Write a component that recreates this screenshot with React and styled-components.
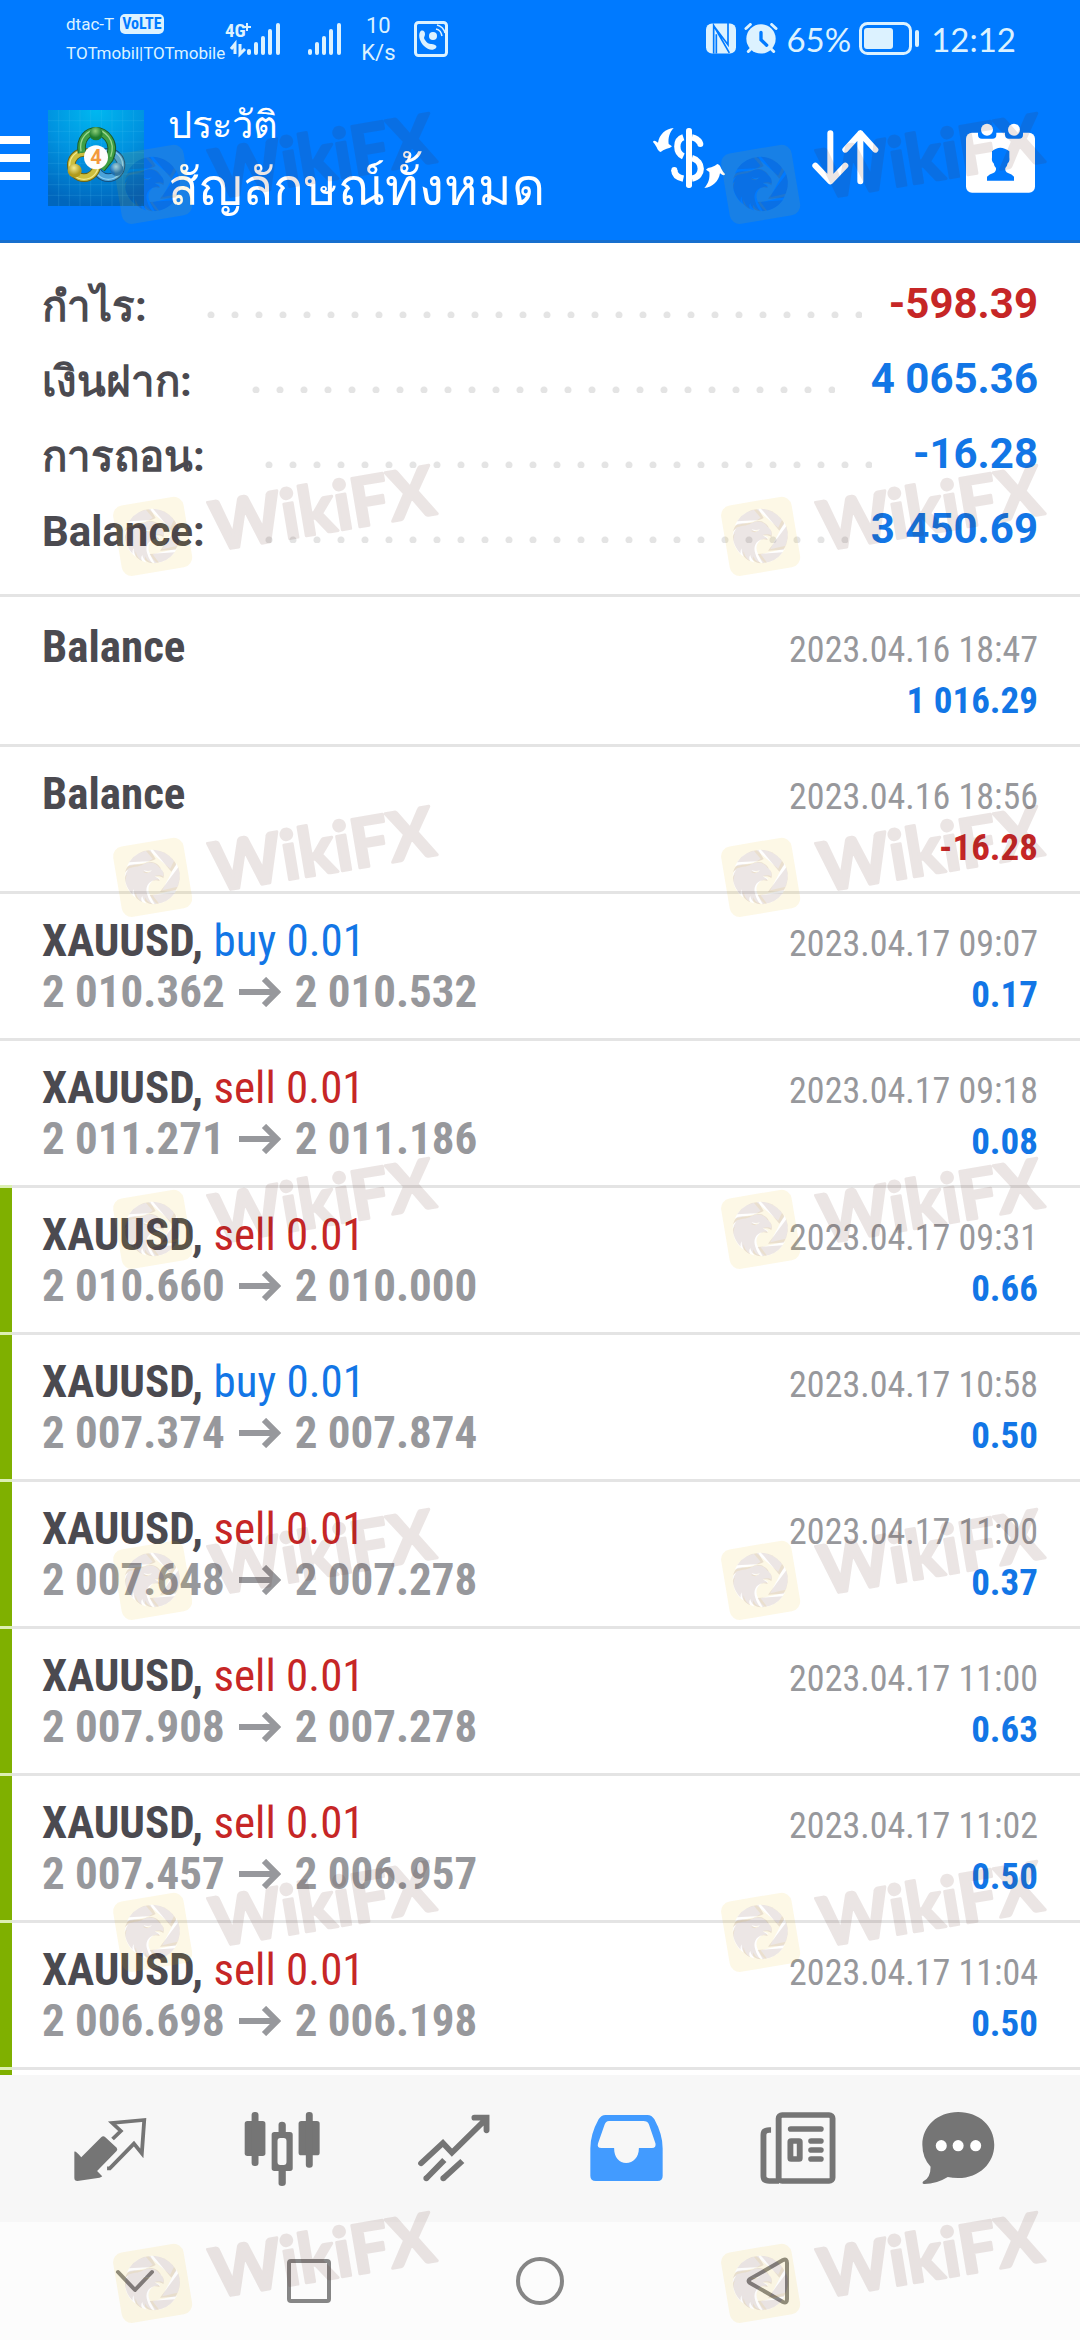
import React from "react";
import styled, { createGlobalStyle } from "styled-components";

const color = {
  brand: "#007aff",
  text: "#4b4a50",
  muted: "#97989c",
  blue: "#1276e6",
  red: "#c62626",
  rule: "#e4e4e4",
  green: "#7fb000",
  greenRule: "#dcefb4",
  status: "#dcf2ff",
  tab: "#757575",
  tabActive: "#429bff",
};

const condensed = `"Roboto Condensed", Roboto, "Liberation Sans", sans-serif`;

const GlobalStyle = createGlobalStyle`
  * { box-sizing: border-box; }
  body { margin: 0; background: #fff; }
  body, button { font-family: Roboto, "Liberation Sans", sans-serif; }
  h1, h2, p, dl, dt, dd, ul { margin: 0; padding: 0; font-weight: inherit; }
`;

const Page = styled.div`
  position: relative;
  display: flex;
  flex-direction: column;
  height: 100vh;
  overflow: hidden;
`;

/* ---------- header ---------- */

const Header = styled.header`
  background: ${color.brand};
  border-bottom: 3px solid #176fce;
  color: #fff;
`;

const StatusBar = styled.div`
  display: flex;
  align-items: center;
  height: 75px;
  padding: 2px 64px 0 66px;
  color: ${color.status};
`;

const Carriers = styled.div`
  display: grid;
  font-size: 17px;
  line-height: 29px;
  white-space: nowrap;
`;

const CarrierLine = styled.div`
  display: flex;
  align-items: center;
  gap: 6px;
`;

const Badge = styled.span`
  padding: 0 2px;
  border-radius: 5px;
  background: ${color.status};
  color: ${color.brand};
  font-family: ${condensed};
  font-size: 16px;
  font-weight: 700;
  line-height: 20px;
`;

const Speed = styled.div`
  font-size: 22px;
  line-height: 27px;
  text-align: center;
`;

const StatusGroup = styled.div`
  display: flex;
  align-items: center;
  gap: ${(p) => p.$gap}px;
  margin-left: ${(p) => (p.$end ? "auto" : "0")};
`;

const StatusText = styled.span`
  font-family: Lato, Roboto, sans-serif;
  font-size: 33px;
  line-height: 40px;
`;

const Clock = styled(StatusText)`
  margin-left: 4px;
`;

const Toolbar = styled.div`
  display: flex;
  align-items: center;
  height: 165px;
  padding-right: 45px;
`;

const IconButton = styled.button`
  display: flex;
  flex: none;
  padding: 0;
  border: 0;
  background: none;
  color: inherit;
  cursor: pointer;
`;

const AppLogo = styled.div`
  display: flex;
  margin: 0 24px 0 18px;
`;

const Titles = styled.div`
  flex: 1;
  min-width: 0;
  padding-top: 10px;
  white-space: nowrap;
`;

const Title = styled.h1`
  font-size: 38px;
  line-height: 50px;
`;

const Subtitle = styled.p`
  font-size: 51px;
  line-height: 76px;
`;

const Actions = styled.div`
  display: flex;
  align-items: center;
  gap: 87px;
`;

/* ---------- summary ---------- */

const Summary = styled.dl`
  padding: 23px 42px 28px;
  border-bottom: 3px solid ${color.rule};
  font-size: 42px;
  font-weight: 700;
`;

const SummaryRow = styled.div`
  display: flex;
  align-items: center;
  height: 75px;
`;

const Term = styled.dt`
  padding-top: 6px;
  color: ${color.text};
  line-height: 69px;
`;

const Leader = styled.div`
  flex: 1;
  height: 7px;
  margin: 22px 22px 0 60px;

  &::before {
    content: "";
    display: block;
    width: calc(round(down, 100% - 7px, 24px) + 7px);
    height: 7px;
    background: radial-gradient(circle at 4px 4px, ${color.rule} 3px, transparent 4px) 0 0 / 24px 7px;
  }
`;

const Total = styled.dd`
  color: ${(p) => (p.$loss ? color.red : color.blue)};
  line-height: 75px;
`;

/* ---------- deals ---------- */

const Scroll = styled.main`
  display: flex;
  flex: 1;
  flex-direction: column;
  min-height: 0;
  overflow: hidden;
`;

const Deals = styled.ul`
  display: flex;
  flex: 1;
  flex-direction: column;
  list-style: none;
`;

const Deal = styled.li`
  position: relative;
  flex: none;
  padding: 21px 42px;
  border-top: 3px solid ${color.rule};
  font-family: ${condensed};

  &:first-child { border-color: transparent; }

  &::before {
    content: "";
    position: absolute;
    top: 0;
    bottom: 0;
    left: 0;
    width: 12px;
    background: ${(p) => (p.$marked ? color.green : "none")};
  }

  &::after {
    content: "";
    position: absolute;
    top: -3px;
    left: 0;
    width: 12px;
    height: 3px;
    background: ${(p) => (p.$marked ? color.greenRule : "none")};
  }
`;

const NextDeal = styled(Deal)`
  flex: 1;
  padding: 0;
`;

const Line = styled.div`
  display: flex;
  align-items: baseline;
  height: 51px;
  font-size: 45px;
  line-height: 51px;
  white-space: nowrap;

  &::before { content: "\\200b"; }
`;

const Symbol = styled.h2`
  color: ${color.text};
  font-size: 45px;
  font-weight: 700;
`;

const Side = styled.span`
  color: ${(p) => (p.$side === "buy" ? color.blue : color.red)};
  font-weight: 400;
`;

const Prices = styled.span`
  display: inline-flex;
  align-items: baseline;
  gap: 14px;
  color: ${color.muted};
  font-weight: 700;
`;

const Time = styled.time`
  margin-left: auto;
  color: ${color.muted};
  font-size: 36px;
  line-height: 40px;
`;

const Amount = styled.span`
  margin-left: auto;
  color: ${(p) => (p.$loss ? color.red : color.blue)};
  font-size: 37px;
  font-weight: 700;
  line-height: 40px;
`;

/* ---------- bottom bars ---------- */

const TabBar = styled.nav`
  display: grid;
  grid-template-columns: repeat(6, 1fr);
  height: 147px;
  padding: 0 24px;
  background: #f7f7f7;
`;

const Tab = styled(IconButton)`
  align-items: center;
  justify-content: center;
  color: ${(p) => (p.$active ? color.tabActive : color.tab)};
`;

const SystemBar = styled.nav`
  display: grid;
  grid-template-columns: 174fr 174fr 288fr 168fr;
  height: 118px;
  padding: 0 228px 0 48px;
  background: #fcfcfc;
`;

const SystemKey = styled(IconButton)`
  align-items: center;
  justify-content: center;
  color: #868686;
`;

/* ---------- watermark ---------- */

const Watermarks = styled.div`
  position: absolute;
  inset: 0;
  overflow: hidden;
  pointer-events: none;
`;

const Mark = styled.div`
  position: absolute;
  top: ${(p) => p.$top}px;
  left: ${(p) => p.$left}px;

  svg { display: block; overflow: visible; }
`;

const WatermarkArt = () => (
  <svg width="340" height="96" viewBox="0 0 340 96" aria-hidden="true">
    <defs>
      <g id="eagle">
        <path d="M66 97 A82 82 0 0 1 130 60 L146 87 C138 91 132 94 122 94Z" />
        <path d="M138 59 A82 82 0 0 1 208 104 L193 125Z" />
        <path d="M214 112 A82 82 0 0 1 206 182 L159 185Z" />
        <path d="M203 190 A82 82 0 0 1 143 223 L128 195Z" />
        <path fillRule="evenodd" d="M66 106 C80 99 100 106 116 99 C134 92 154 99 162 117 C170 124 173 133 169 145 C163 138 154 138 143 139 L156 147 L158 153 C146 149 136 151 129 157 C118 166 116 180 121 194 C125 207 130 215 137 223 C121 221 108 213 106 198 C102 203 102 209 105 216 C89 209 79 196 80 178 C77 182 76 187 77 194 C63 180 55 162 54 145 C55 134 58 126 63 121 C58 122 56 125 54 128 C56 119 60 111 66 106Z M110 120C117 129 129 130 134 121C127 124 118 124 110 120Z" />
      </g>
      <mask id="tileMask">
        <rect x="0" y="0" width="290" height="290" fill="#fff" />
        <use href="#eagle" fill="#000" />
      </mask>
    </defs>
    <g transform="scale(.3333) translate(-15 -21)">
      <rect x="30" y="35" width="214" height="214" rx="30" transform="rotate(-9.5 137 142)" fill="#f0b80c" fillOpacity=".1" mask="url(#tileMask)" />
      <use href="#eagle" fill="#55231a" fillOpacity=".115" />
    </g>
    <text
      transform="translate(103 55) rotate(-9.5)"
      fontFamily="Lato, Roboto, sans-serif"
      fontSize="68"
      fontWeight="700"
      fill="#55231a"
      stroke="#55231a"
      strokeWidth="3"
      strokeLinejoin="round"
      opacity=".115"
    >
      WikiFX
    </text>
  </svg>
);

/* ---------- drawings ---------- */

const Signal = ({ x }) => (
  <g fill="currentColor">
    <rect x={x} y="30" width="4" height="6" rx="2" />
    <rect x={x + 7} y="23" width="4" height="13" rx="2" />
    <rect x={x + 14} y="17" width="4" height="19" rx="2" />
    <rect x={x + 21} y="10" width="4" height="26" rx="2" />
    <rect x={x + 29} y="4" width="4" height="32" rx="2" />
  </g>
);

const SignalIcons = () => (
  <svg width="118" height="40" viewBox="0 0 118 40" aria-hidden="true">
    <text x="0" y="18" fontFamily="Roboto Condensed" fontWeight="700" fontSize="19" fill="currentColor">4G</text>
    <path d="M18 8h8M22 4v8" stroke="currentColor" strokeWidth="2" />
    <path d="M10 35V25L6 30M15 25v10l5-5" fill="none" stroke="currentColor" strokeWidth="3" />
    <Signal x={22} />
    <Signal x={83} />
  </svg>
);

const CallIcon = () => (
  <svg width="34" height="36" viewBox="0 0 34 36" fill="none" stroke="currentColor" aria-hidden="true">
    <rect x="1.5" y="1.5" width="31" height="33" rx="3" strokeWidth="3" />
    <path d="M6 11c2-3 5-1 5 2s-2 3 0 6 4 4 6 4 7 1 5 4c-3 3-8 2-12-2S4 15 6 11z" fill="currentColor" stroke="none" />
    <circle cx="19" cy="15" r="4" fill="currentColor" stroke="none" />
    <path d="M22 8c4 1 5 3 6 7M23 4c4 1 7 4 8 8" strokeWidth="1.5" />
  </svg>
);

const NfcIcon = () => (
  <svg width="30" height="31" viewBox="436 66 90 90" aria-hidden="true">
    <rect x="436" y="66" width="90" height="90" rx="18" fill="currentColor" />
    <path d="M459 156V72L506 154M502 64V130L460 74M467 98V156" stroke="#007aff" strokeWidth="5" fill="none" />
  </svg>
);

const AlarmIcon = () => (
  <svg width="34" height="31" viewBox="558 66 102 92" fill="none" stroke="currentColor" strokeLinecap="round" aria-hidden="true">
    <circle cx="609" cy="113" r="44" fill="currentColor" stroke="none" />
    <path d="M564 82L577 70M654 82L641 70M571 151L580 142M647 151L638 142" strokeWidth="9" />
    <path d="M609 94V116L626 132" stroke="#007aff" strokeWidth="10" />
  </svg>
);

const BatteryIcon = () => (
  <svg width="60" height="33" viewBox="0 0 60 33" fill="none" stroke="currentColor" aria-hidden="true">
    <rect x="1.5" y="1.5" width="50" height="30" rx="7" strokeWidth="3" />
    <rect x="5" y="6" width="29" height="21" rx="3" fill="currentColor" stroke="none" />
    <rect x="56" y="8" width="4" height="17" rx="2" fill="currentColor" stroke="none" />
  </svg>
);

const MenuIcon = () => (
  <svg width="30" height="44" viewBox="0 0 30 44" aria-hidden="true">
    <path d="M0 4h30M0 22h30M0 40h30" stroke="#fff" strokeWidth="8" />
  </svg>
);

const MetaTraderLogo = () => (
  <svg width="96" height="96" viewBox="0 0 288 288" aria-hidden="true">
    <defs>
      <radialGradient id="sky" cx="50%" cy="0%" r="100%">
        <stop offset="0" stopColor="#00b8f0" />
        <stop offset=".5" stopColor="#0093e0" />
        <stop offset="1" stopColor="#0066bd" />
      </radialGradient>
      <radialGradient id="green" cx="45%" cy="30%"><stop offset="0" stopColor="#8fd07a" /><stop offset="1" stopColor="#1e7d2e" /></radialGradient>
      <radialGradient id="gold" cx="45%" cy="30%"><stop offset="0" stopColor="#f4ec90" /><stop offset="1" stopColor="#b09a1c" /></radialGradient>
      <radialGradient id="azure" cx="45%" cy="30%"><stop offset="0" stopColor="#9fd6f4" /><stop offset="1" stopColor="#1d6fb0" /></radialGradient>
    </defs>
    <rect width="288" height="288" fill="url(#sky)" />
    <path d="M32 0V288M64 0V288M96 0V288M128 0V288M160 0V288M192 0V288M224 0V288M256 0V288M0 32H288M0 64H288M0 96H288M0 128H288M0 160H288M0 192H288M0 224H288M0 256H288" stroke="#5cc6f5" strokeOpacity=".25" strokeWidth="2" />
    <g fill="none">
      <circle cx="181" cy="165" r="38" stroke="#15507f" strokeWidth="26" />
      <circle cx="181" cy="165" r="38" stroke="#4ba3da" strokeWidth="20" />
      <circle cx="181" cy="165" r="43" stroke="#8fd0f2" strokeWidth="4" />
      <circle cx="108" cy="165" r="38" stroke="#6d6412" strokeWidth="26" />
      <circle cx="108" cy="165" r="38" stroke="#cdbf3e" strokeWidth="20" />
      <circle cx="108" cy="165" r="43" stroke="#efe78c" strokeWidth="4" />
      <path d="M102 128C94 84 122 64 144 64S208 92 184 146L160 176" stroke="#1c5c2a" strokeWidth="26" />
      <path d="M102 128C94 84 122 64 144 64S208 92 184 146L160 176" stroke="#3f9f44" strokeWidth="20" />
      <path d="M99 124C92 84 120 60 144 60S206 88 188 140" stroke="#9ad68c" strokeWidth="4" />
    </g>
    <circle cx="144" cy="71" r="20" fill="url(#green)" />
    <circle cx="80" cy="182" r="21" fill="url(#gold)" />
    <circle cx="206" cy="178" r="20" fill="url(#azure)" />
    <circle cx="144" cy="142" r="36" fill="#fdfdfd" />
    <text x="144" y="163" textAnchor="middle" fontFamily="Roboto" fontWeight="700" fontSize="60" fill="#f39a3d">4</text>
  </svg>
);

const CurrencyIcon = () => (
  <svg width="72" height="60" viewBox="27 42 216 180" fill="none" stroke="#fff" strokeWidth="19" aria-hidden="true">
    <rect x="126" y="42" width="18" height="180" rx="8" fill="#fff" stroke="none" />
    <path d="M118 70C94 78 94 116 118 127M144 70C156 72 163 78 168 87M144 132C179 142 179 188 144 194M118 194C100 190 91 180 91 168" />
    <circle cx="169" cy="90" r="9" fill="#fff" stroke="none" />
    <circle cx="91" cy="168" r="9" fill="#fff" stroke="none" />
    <path id="swap" d="M89 42C76 56 72 72 74 90L84 97Q80 103 68 104Q56 108 50 114Q43 113 38 100Q33 90 27 84Q29 75 42 86C46 62 64 44 89 42Z" fill="#fff" stroke="none" />
    <use href="#swap" transform="rotate(180 135 132)" />
  </svg>
);

const SortIcon = () => (
  <svg width="67" height="55" viewBox="758 394 201 165" fill="none" stroke="#fff" strokeWidth="18" strokeLinecap="round" strokeLinejoin="round" aria-hidden="true">
    <path d="M813 404V548M768 501L813 548L858 501M903 548V404M858 453L903 404L948 453" />
  </svg>
);

const CalendarIcon = () => (
  <svg width="69" height="70" viewBox="1218 367 207 210" fill="#fff" aria-hidden="true">
    <rect x="1218" y="396" width="207" height="180" rx="18" />
    <path d="M1254 390H1309V402Q1309 414 1297 414H1266Q1254 414 1254 402ZM1335 390H1389V402Q1389 414 1377 414H1347Q1335 414 1335 402Z" fill="#007aff" />
    <circle cx="1281" cy="387" r="18" />
    <circle cx="1362" cy="387" r="18" />
    <path d="M1281 540V528Q1288 520 1300 517Q1309 513 1308 502Q1303 499 1301 488Q1294 482 1296 470V452Q1308 441 1321 441T1348 452V470Q1350 482 1343 488Q1341 499 1336 502Q1334 513 1344 517Q1356 520 1362 528V540Z" fill="#007aff" />
  </svg>
);

const tabIcons = {
  Quotes: (
    <svg width="73" height="76" viewBox="214 150 212 228" preserveAspectRatio="none">
      <path d="M326 234L350 210L325 186L418 177L411 277L388 248L318 322H310" fill="none" stroke="currentColor" strokeWidth="11" />
      <path d="M293 229Q299 222 305 229L338 260Q342 266 337 271L281 330L296 346Q294 349 288 350L224 360Q215 360 215 351V272Q220 270 235 289Z" fill="currentColor" />
    </svg>
  ),
  Charts: (
    <svg width="76" height="76" viewBox="707 150 220 228" preserveAspectRatio="none" fill="currentColor">
      <rect x="709" y="180" width="60" height="105" rx="8" />
      <rect x="729" y="153" width="20" height="162" rx="9" />
      <rect x="865" y="180" width="61" height="103" rx="8" />
      <rect x="886" y="153" width="20" height="167" rx="9" />
      <path d="M807 213V191Q807 182 817 182T828 191V213H840Q848 213 848 221V322Q848 330 840 330H828V366Q828 375 817 375T807 366V330H795Q787 330 787 322V221Q787 213 795 213ZM812 231Q804 231 804 240V303Q804 312 812 312H822Q830 312 830 303V240Q830 231 822 231Z" fillRule="evenodd" />
    </svg>
  ),
  Trade: (
    <svg width="72" height="76" viewBox="1213 150 208 228" preserveAspectRatio="none" fill="none" stroke="currentColor" strokeWidth="17">
      <path d="M1222 307L1285 246L1311 275L1406 178M1376 170H1411V208" strokeLinecap="round" />
      <path d="M1237 352L1289 297M1286 352L1341 300" />
      <path d="M1237 352h0M1286 352h0" strokeLinecap="round" />
    </svg>
  ),
  History: (
    <svg width="73" height="76" viewBox="145 150 212 228" preserveAspectRatio="none">
      <path fill="currentColor" fillRule="evenodd" d="M190 162H312Q324 162 332 175Q356 220 356 262V345Q356 360 341 360H162Q146 360 146 345V262Q146 220 170 175Q178 162 190 162ZM200 180Q191 180 187 192L168 248Q165 261 178 261H215C215 290 230 306 250 306S287 290 287 261H325Q338 261 335 247L316 190Q312 180 300 180Z" />
    </svg>
  ),
  News: (
    <svg width="76" height="76" viewBox="645 150 220 228" preserveAspectRatio="none" fill="none" stroke="currentColor" strokeWidth="17">
      <rect x="699" y="162" width="156" height="198" rx="10" />
      <path d="M677 207H672Q655 207 655 222V345Q655 360 672 360H700" />
      <path d="M734 204H821M793 240H821M793 267H821M793 294H821" strokeLinecap="round" />
      <rect x="733" y="240" width="27" height="54" rx="2" />
    </svg>
  ),
  Messages: (
    <svg width="96" height="76" viewBox="1108 150 279 228" preserveAspectRatio="none">
      <path fill="currentColor" d="M1213 153C1275 153 1318 196 1318 251S1275 351 1213 351Q1196 351 1183 348Q1150 369 1115 369Q1106 368 1112 361Q1133 350 1133 317Q1109 290 1109 251C1109 196 1153 153 1213 153Z" />
      <ellipse cx="1164" cy="254" rx="16" ry="17" fill="#fff" />
      <ellipse cx="1213" cy="254" rx="16" ry="17" fill="#fff" />
      <ellipse cx="1264" cy="254" rx="16" ry="17" fill="#fff" />
    </svg>
  ),
};

const systemIcons = {
  Hide: <path d="M8 16L25 34L42 16" />,
  Recents: <rect x="5" y="5" width="40" height="40" rx="2" />,
  Home: <circle cx="25" cy="25" r="22" />,
  Back: <path d="M7 23L40 4Q44 2 44 7V43Q44 48 40 46L7 27Q4 25 7 23Z" />,
};

/* ---------- data ---------- */

const totals = [
  { label: "กำไร:", value: "-598.39", loss: true },
  { label: "เงินฝาก:", value: "4 065.36" },
  { label: "การถอน:", value: "-16.28" },
  { label: "Balance:", value: "3 450.69" },
];

const deals = [
  { time: "2023.04.16 18:47", amount: "1 016.29" },
  { time: "2023.04.16 18:56", amount: "-16.28" },
  { side: "buy", open: "2 010.362", close: "2 010.532", time: "2023.04.17 09:07", amount: "0.17" },
  { side: "sell", open: "2 011.271", close: "2 011.186", time: "2023.04.17 09:18", amount: "0.08" },
  { side: "sell", open: "2 010.660", close: "2 010.000", time: "2023.04.17 09:31", amount: "0.66", marked: true },
  { side: "buy", open: "2 007.374", close: "2 007.874", time: "2023.04.17 10:58", amount: "0.50", marked: true },
  { side: "sell", open: "2 007.648", close: "2 007.278", time: "2023.04.17 11:00", amount: "0.37", marked: true },
  { side: "sell", open: "2 007.908", close: "2 007.278", time: "2023.04.17 11:00", amount: "0.63", marked: true },
  { side: "sell", open: "2 007.457", close: "2 006.957", time: "2023.04.17 11:02", amount: "0.50", marked: true },
  { side: "sell", open: "2 006.698", close: "2 006.198", time: "2023.04.17 11:04", amount: "0.50", marked: true },
];

const markTops = [144, 496, 837, 1189, 1540, 1892, 2243];
const markLefts = [112, 720];

const Arrow = () => (
  <svg width="42" height="30" viewBox="0 0 42 30" fill="none" stroke="currentColor" strokeWidth="6" aria-label="to">
    <path d="M0 15H38M25 2L38 15L25 28" />
  </svg>
);

function DealRow({ deal }) {
  return (
    <Deal $marked={deal.marked}>
      <Line>
        <Symbol>
          {deal.side ? "XAUUSD, " : "Balance"}
          {deal.side && <Side $side={deal.side}>{deal.side} 0.01</Side>}
        </Symbol>
        <Time>{deal.time}</Time>
      </Line>
      <Line>
        {deal.side && (
          <Prices>
            <span>{deal.open}</span>
            <Arrow />
            <span>{deal.close}</span>
          </Prices>
        )}
        <Amount $loss={deal.amount.startsWith("-")}>{deal.amount}</Amount>
      </Line>
    </Deal>
  );
}

export default function App() {
  return (
    <Page>
      <GlobalStyle />
      <Header>
        <StatusBar>
          <Carriers>
            <CarrierLine>
              dtac-T <Badge>VoLTE</Badge>
            </CarrierLine>
            <CarrierLine>TOTmobil|TOTmobile</CarrierLine>
          </Carriers>
          <StatusGroup $gap={18}>
            <SignalIcons />
            <Speed>
              10
              <br />
              K/s
            </Speed>
            <CallIcon />
          </StatusGroup>
          <StatusGroup $gap={8} $end>
            <NfcIcon />
            <AlarmIcon />
            <StatusText>65%</StatusText>
            <BatteryIcon />
            <Clock>12:12</Clock>
          </StatusGroup>
        </StatusBar>
        <Toolbar>
          <IconButton aria-label="Menu">
            <MenuIcon />
          </IconButton>
          <AppLogo>
            <MetaTraderLogo />
          </AppLogo>
          <Titles>
            <Title>ประวัติ</Title>
            <Subtitle>สัญลักษณ์ทั้งหมด</Subtitle>
          </Titles>
          <Actions>
            <IconButton aria-label="Currency">
              <CurrencyIcon />
            </IconButton>
            <IconButton aria-label="Sort">
              <SortIcon />
            </IconButton>
            <IconButton aria-label="Period">
              <CalendarIcon />
            </IconButton>
          </Actions>
        </Toolbar>
      </Header>

      <Scroll>
        <Summary>
          {totals.map((t) => (
            <SummaryRow key={t.label}>
              <Term>{t.label}</Term>
              <Leader />
              <Total $loss={t.loss}>{t.value}</Total>
            </SummaryRow>
          ))}
        </Summary>
        <Deals>
          {deals.map((deal, i) => (
            <DealRow key={i} deal={deal} />
          ))}
          <NextDeal $marked aria-hidden="true" />
        </Deals>
      </Scroll>

      <TabBar>
        {Object.entries(tabIcons).map(([name, icon]) => (
          <Tab key={name} aria-label={name} $active={name === "History"}>
            {icon}
          </Tab>
        ))}
      </TabBar>
      <SystemBar>
        {Object.entries(systemIcons).map(([name, shape]) => (
          <SystemKey key={name} aria-label={name}>
            <svg width="50" height="50" viewBox="0 0 50 50" fill="none" stroke="currentColor" strokeWidth="4" strokeLinecap="round" strokeLinejoin="round">
              {shape}
            </svg>
          </SystemKey>
        ))}
      </SystemBar>

      <Watermarks aria-hidden="true">
        {markTops.flatMap((top) =>
          markLefts.map((left) => (
            <Mark key={`${top}-${left}`} $top={top} $left={left}>
              <WatermarkArt />
            </Mark>
          ))
        )}
      </Watermarks>
    </Page>
  );
}
